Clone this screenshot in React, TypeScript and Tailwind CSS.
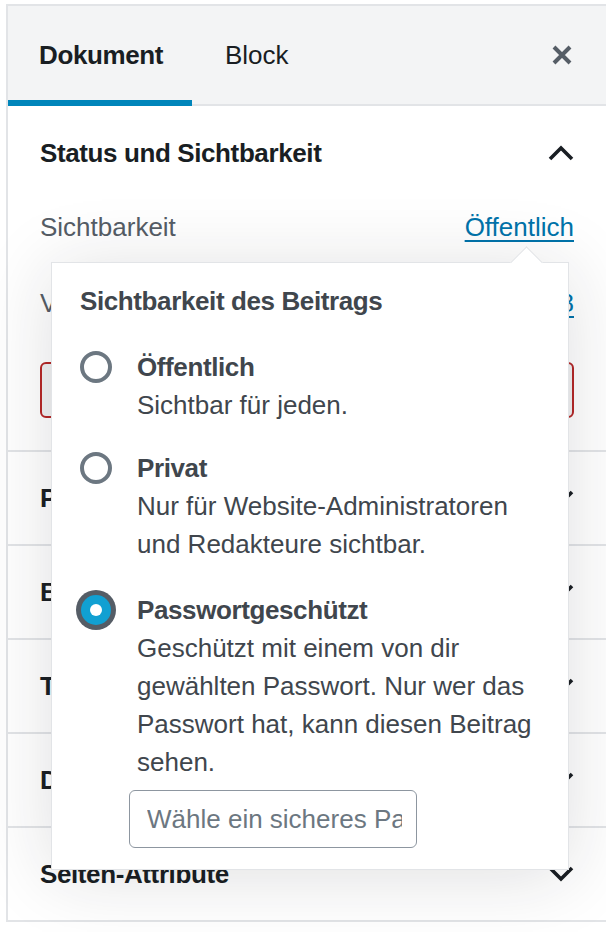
import React from "react";

const font = "font-['Liberation_Sans','Arial',sans-serif]";

function ChevronDown() {
  return (
    <svg width="26" height="16" viewBox="0 0 26 16" fill="none">
      <polyline points="2,2 13,13 24,2" stroke="#191e23" strokeWidth="3.6" />
    </svg>
  );
}

function ChevronUp() {
  return (
    <svg width="26" height="16" viewBox="0 0 26 16" fill="none">
      <polyline points="2,14 13,3 24,14" stroke="#191e23" strokeWidth="3.6" />
    </svg>
  );
}

function Row({ title }: { title: string }) {
  return (
    <div className="h-[94px] border-b-2 border-[#e2e4e7] px-[32px] flex items-center justify-between">
      <span className="text-[26px] font-bold tracking-[-0.015em] text-[#191e23]">{title}</span>
      <ChevronDown />
    </div>
  );
}

function Radio({ checked }: { checked?: boolean }) {
  if (checked)
    return (
      <span className="mt-[4px] ml-[1px] flex items-center justify-center w-[30px] h-[30px] rounded-full bg-[#11a0d2] shadow-[0_0_0_5px_#555d66]">
        <span className="block w-[12px] h-[12px] rounded-full bg-white" />
      </span>
    );
  return <span className="mt-[3px] block w-[32px] h-[32px] rounded-full border-[4px] border-[#6c7781] bg-white" />;
}

function Option({
  checked,
  label,
  lines,
}: {
  checked?: boolean;
  label: string;
  lines: string[];
}) {
  return (
    <div className="flex">
      <div className="w-[57px] shrink-0">
        <Radio checked={checked} />
      </div>
      <div className="text-[26px] leading-[38px] text-[#40464d] whitespace-nowrap">
        <div className="font-bold tracking-[-0.015em]">{label}</div>
        {lines.map((l) => (
          <div key={l}>{l}</div>
        ))}
      </div>
    </div>
  );
}

export default function App() {
  return (
    <div className={`min-h-screen bg-white pt-[4px] pl-[6px] ${font}`}>
      <div className="relative border-l-2 border-t-2 border-[#e2e4e7]">
        {/* tabs */}
        <div className="relative h-[100px] bg-[#f3f4f5] border-b-2 border-[#e2e4e7] flex items-center">
          <div className="w-[184px] pl-[31px] text-[26px] font-bold tracking-[-0.015em] text-[#191e23]">Dokument</div>
          <div className="pl-[33px] text-[26px] text-[#191e23]">Block</div>
          <div className="ml-auto mr-[33px]">
            <svg width="22" height="22" viewBox="0 0 22 22">
              <path d="M3 3 L19 19 M19 3 L3 19" stroke="#555d66" strokeWidth="4" />
            </svg>
          </div>
          <div className="absolute left-0 bottom-[-2px] w-[184px] h-[6px] bg-[#0085ba]" />
        </div>

        {/* status panel */}
        <div className="border-b-2 border-[#e2e4e7] px-[32px] pt-[29px] pb-[32px]">
          <div className="flex items-center justify-between h-[36px]">
            <span className="text-[26px] font-bold tracking-[-0.015em] text-[#191e23]">Status und Sichtbarkeit</span>
            <ChevronUp />
          </div>
          <div className="mt-[38px] flex items-center justify-between h-[36px] text-[26px]">
            <span className="text-[#555d66]">Sichtbarkeit</span>
            <span className="text-[#0073aa] underline underline-offset-[4px]">Öffentlich</span>
          </div>
          <div className="mt-[40px] flex items-center justify-between h-[36px] text-[26px]">
            <span className="text-[#555d66]">Veröffentlichen</span>
            <span className="text-[#0073aa] underline underline-offset-[4px]">13.03.2018</span>
          </div>
          <div className="mt-[41px] h-[56px] rounded-[6px] border-2 border-[#b52727] bg-[#f1f2f3] flex items-center justify-center text-[26px] text-[#b52727]">
            In den Papierkorb verschieben
          </div>
        </div>

        <Row title="Permalink" />
        <Row title="Beitragsbild" />
        <Row title="Textauszug" />
        <Row title="Diskussion" />
        <Row title="Seiten-Attribute" />

        {/* popover */}
        <div className="absolute left-[43px] top-[256px] w-[518px] border border-[#e2e4e7] bg-white shadow-[0_6px_70px_rgba(25,30,35,0.14)] pl-[28px] pr-[20px] pt-[20px] pb-[21px]">
          <div className="absolute left-[463px] top-[-12px] w-[23px] h-[23px] rotate-45 bg-white border-l border-t border-[#e2e4e7]" />
          <div className="relative text-[26px] leading-[36px] font-bold tracking-[-0.015em] text-[#40464d]">Sichtbarkeit des Beitrags</div>
          <div className="mt-[29px]">
            <Option label="Öffentlich" lines={["Sichtbar für jeden."]} />
          </div>
          <div className="mt-[25px]">
            <Option label="Privat" lines={["Nur für Website-Administratoren", "und Redakteure sichtbar."]} />
          </div>
          <div className="mt-[28px]">
            <Option
              checked
              label="Passwortgeschützt"
              lines={[
                "Geschützt mit einem von dir",
                "gewählten Passwort. Nur wer das",
                "Passwort hat, kann diesen Beitrag",
                "sehen.",
              ]}
            />
          </div>
          <input
            className="block mt-[9px] ml-[49px] w-[288px] h-[58px] rounded-[6px] border border-[#8d96a0] pl-[17px] pr-[14px] text-[26px] text-[#32373c] placeholder:text-[#6c7781] outline-none"
            placeholder="Wähle ein sicheres Passwort"
          />
        </div>
      </div>
    </div>
  );
}
